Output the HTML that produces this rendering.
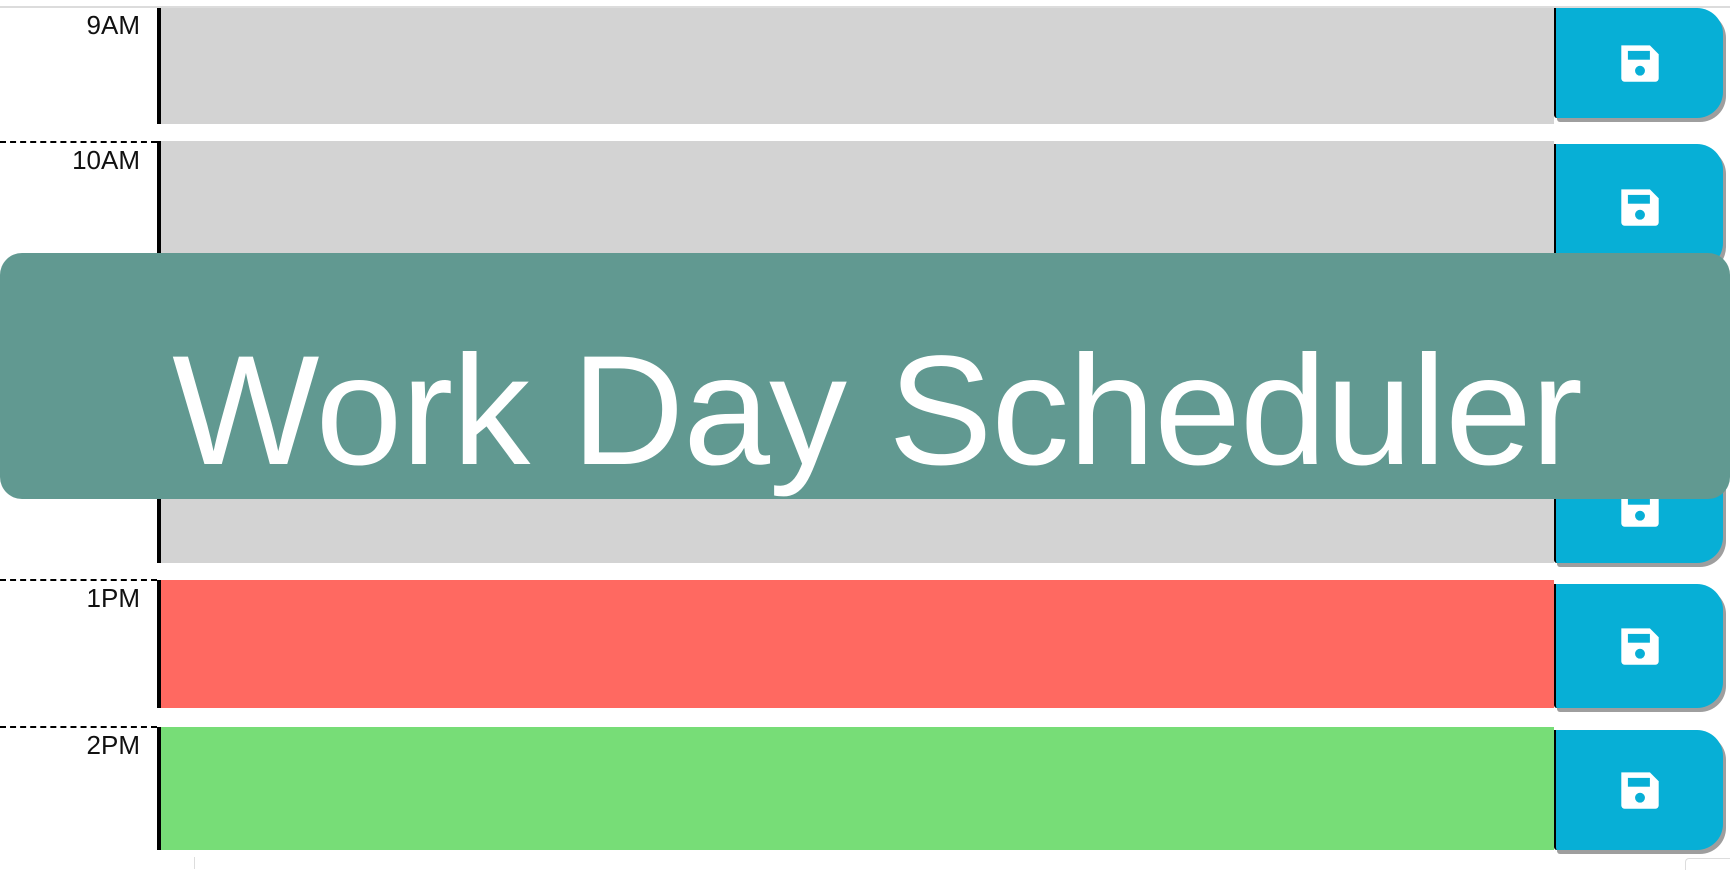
<!DOCTYPE html>
<html><head><style>
body{margin:0;width:1730px;height:869px;position:relative;overflow:hidden;background:#fff;font-family:"Liberation Sans",sans-serif}
.top{position:absolute;left:0;top:6px;width:1730px;height:2px;background:#dcdcdc}
.time{position:absolute;left:0;width:157px;padding-right:17px;text-align:right;font-size:26px;line-height:30px;color:#111;padding-top:2px;border-top:2px dashed #000;box-sizing:border-box}
.bar{position:absolute;left:157px;width:4px;background:#000}
.ta{position:absolute;left:161px;width:1393px}
.btn{position:absolute;left:1554px;width:169px;background:#07afd6;border-left:2px solid #000;border-radius:0 26px 26px 3px;box-shadow:3px 4px 0 #9e9e9e;box-sizing:border-box;display:flex;align-items:center;justify-content:center}
.hdr{position:absolute;left:0;top:253px;width:1730px;height:246px;background:#619991;border-radius:22px;color:#fff}
.hdr span{position:absolute;left:24px;right:0;top:80px;text-align:center;font-size:156px;line-height:156px;letter-spacing:-1px;white-space:nowrap}
</style></head><body>
<div class="top"></div>

<div class="time" style="top:8px;border-top:none">9AM</div><div class="bar" style="top:8px;height:116px"></div><div class="ta" style="top:8px;height:116px;background:#d3d3d3"></div>
<div class="btn" style="top:8px;height:110px"><svg width="44" height="44" viewBox="0 0 40 40"><path d="M3 4h26l8 8v22a3 3 0 0 1-3 3H6a3 3 0 0 1-3-3z" fill="#fff"/><rect x="9" y="9" width="20" height="8" fill="#07afd6"/><circle cx="20" cy="27" r="4.5" fill="#07afd6"/></svg></div>

<div class="time" style="top:141px">10AM</div><div class="bar" style="top:141px;height:128px"></div><div class="ta" style="top:141px;height:128px;background:#d3d3d3"></div>
<div class="btn" style="top:144px;height:125px"><svg width="44" height="44" viewBox="0 0 40 40"><path d="M3 4h26l8 8v22a3 3 0 0 1-3 3H6a3 3 0 0 1-3-3z" fill="#fff"/><rect x="9" y="9" width="20" height="8" fill="#07afd6"/><circle cx="20" cy="27" r="4.5" fill="#07afd6"/></svg></div>

<div class="time" style="top:287px">11AM</div><div class="bar" style="top:287px;height:128px"></div><div class="ta" style="top:287px;height:128px;background:#d3d3d3"></div>
<div class="btn" style="top:290px;height:125px"></div>

<div class="bar" style="top:432px;height:131px"></div><div class="ta" style="top:432px;height:131px;background:#d3d3d3"></div>
<div class="btn" style="top:436px;height:127px"><svg width="44" height="44" viewBox="0 0 40 40" style="margin-top:16px"><path d="M3 4h26l8 8v22a3 3 0 0 1-3 3H6a3 3 0 0 1-3-3z" fill="#fff"/><rect x="9" y="9" width="20" height="8" fill="#07afd6"/><circle cx="20" cy="27" r="4.5" fill="#07afd6"/></svg></div>

<div class="time" style="top:579px">1PM</div><div class="bar" style="top:580px;height:128px"></div><div class="ta" style="top:580px;height:128px;background:#ff6961"></div>
<div class="btn" style="top:584px;height:124px"><svg width="44" height="44" viewBox="0 0 40 40"><path d="M3 4h26l8 8v22a3 3 0 0 1-3 3H6a3 3 0 0 1-3-3z" fill="#fff"/><rect x="9" y="9" width="20" height="8" fill="#07afd6"/><circle cx="20" cy="27" r="4.5" fill="#07afd6"/></svg></div>

<div class="time" style="top:726px">2PM</div><div class="bar" style="top:727px;height:123px"></div><div class="ta" style="top:727px;height:123px;background:#77dd77"></div>
<div class="btn" style="top:730px;height:120px"><svg width="44" height="44" viewBox="0 0 40 40"><path d="M3 4h26l8 8v22a3 3 0 0 1-3 3H6a3 3 0 0 1-3-3z" fill="#fff"/><rect x="9" y="9" width="20" height="8" fill="#07afd6"/><circle cx="20" cy="27" r="4.5" fill="#07afd6"/></svg></div>

<div style="position:absolute;left:194px;top:857px;width:1px;height:12px;background:#ddd"></div>
<div style="position:absolute;left:1685px;top:858px;width:45px;height:11px;border:1px solid #ddd;border-radius:4px 0 0 0;border-right:none;border-bottom:none"></div>

<div class="hdr"><span>Work Day Scheduler</span></div>
</body></html>
